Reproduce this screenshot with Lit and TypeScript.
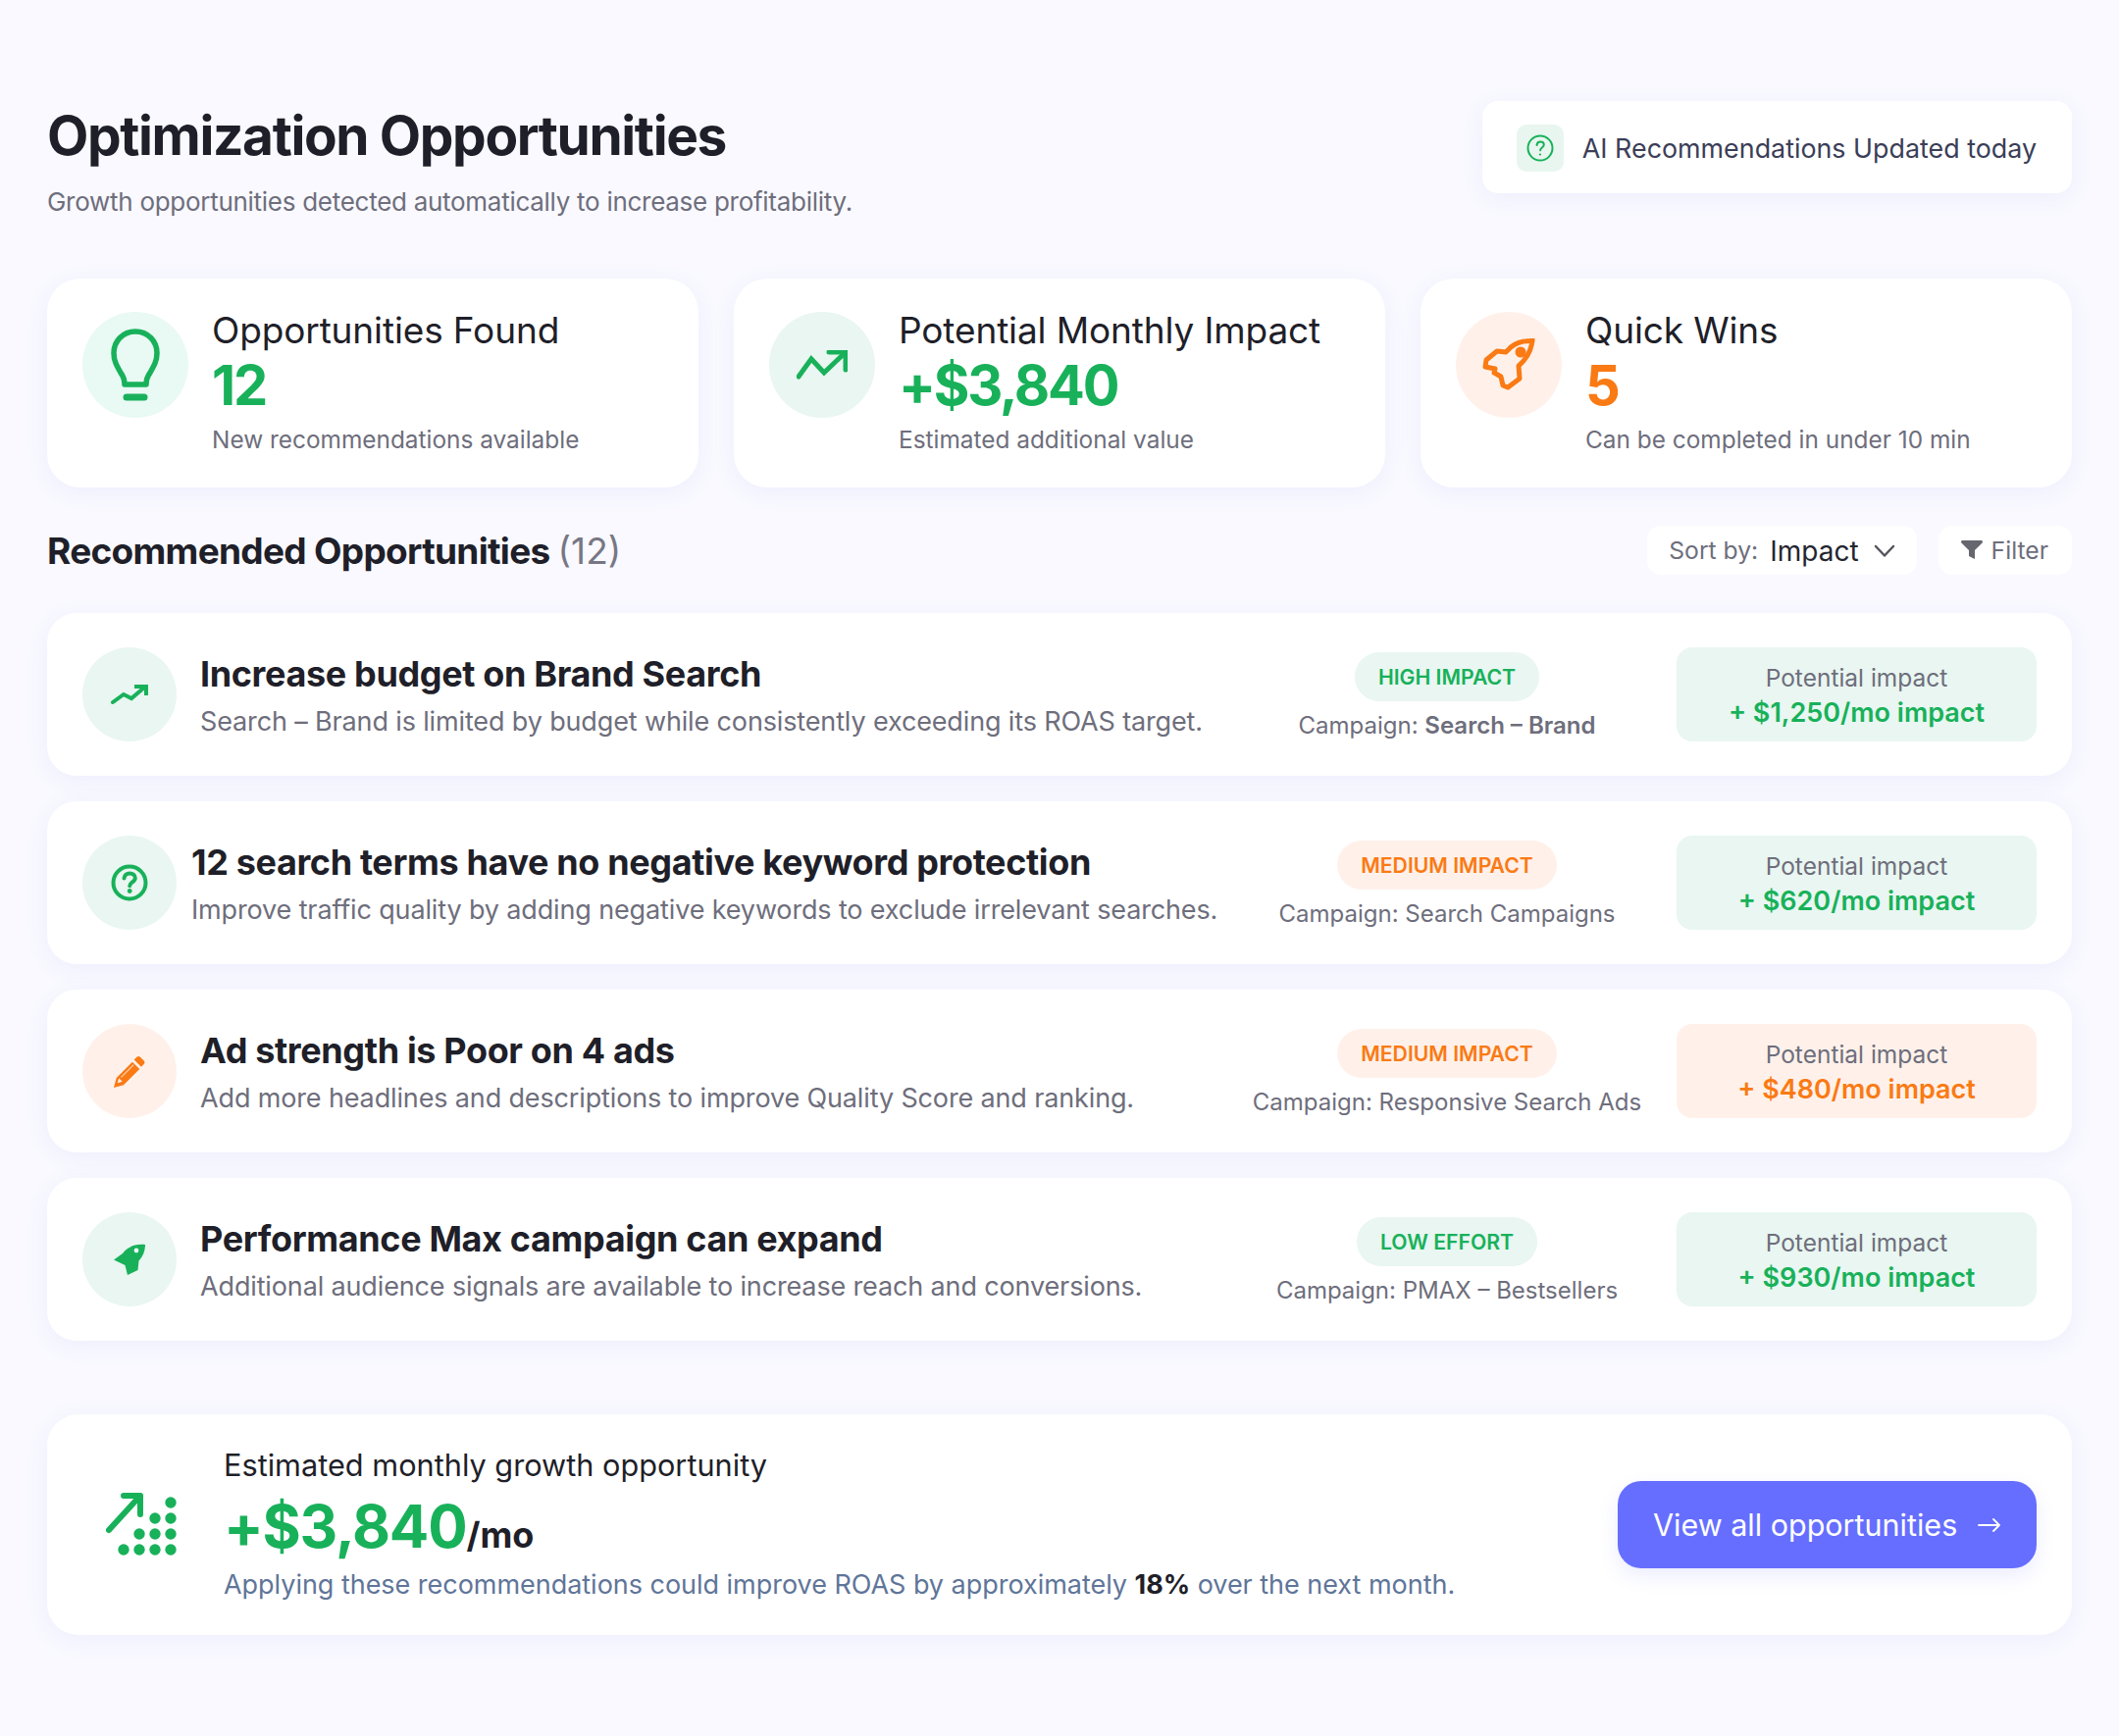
import { LitElement, html, css, svg } from 'lit';
import { customElement } from 'lit/decorators.js';

type Tone = 'green' | 'orange';

const trendStat = svg`<svg class="ic" width="52" height="30" viewBox="0 0 52 30" fill="none" stroke="currentColor" stroke-width="5" stroke-linecap="round" stroke-linejoin="miter"><path d="M2 27 15 9 28 23 50 2"/><path d="M33 2h17v18"/></svg>`;
const bulb = svg`<svg class="ic" width="50" height="74" viewBox="0 0 50 74" fill="none" stroke="currentColor" stroke-width="5.5" stroke-linecap="round" stroke-linejoin="round"><path d="M25 3C12 3 3 13 3 25c0 8 3 13 7 20 3 4 4 8 4 12h22c0-4 1-8 4-12 4-7 7-12 7-20C47 13 38 3 25 3Z"/><path d="M16 70h18" stroke-width="7"/></svg>`;
const rocketOutline = svg`<svg class="ic" width="54" height="54" viewBox="0 0 54 54" fill="none" stroke="currentColor" stroke-width="5" stroke-linejoin="round" stroke-linecap="round"><path d="M51 3C43 2 35 4 29 9l-5 5-9-1-11 9-1 7 10 2-1 4 7 4 2 9 5 2 12-9-1-13 5-5c5-6 9-13 9-24Z"/><circle cx="39" cy="14" r="5.5" fill="currentColor" stroke="none"/></svg>`;
const trendRow = svg`<svg class="ic" width="38" height="22" viewBox="0 0 38 22" fill="none" stroke="currentColor" stroke-width="4" stroke-linecap="round"><path d="M2 19 13 11 21 15 34 4"/><path d="M24 3h12v9" stroke-linecap="butt"/></svg>`;
const questionRow = svg`<svg class="ic" width="38" height="38" viewBox="0 0 38 38" fill="none" stroke="currentColor" stroke-width="4" stroke-linecap="round"><circle cx="19" cy="19" r="16.5"/><path d="M13.5 14.5c.5-3.5 3-5 5.8-5 3.2 0 5.5 2 5.5 4.8 0 4-5.6 4.3-5.6 8"/><circle cx="19.2" cy="27.5" r="2.4" fill="currentColor" stroke="none"/></svg>`;
const pencil = svg`<svg class="ic" width="36" height="36" viewBox="0 0 34 34" fill="currentColor"><path d="M24 3.500c1-.9 2.400-.9 3.400 0l3.500 3.500c.9 1 .9 2.400 0 3.400l-2.600 2.600-6.900-6.900Z"/><path d="M19.800 8.200l6.900 6.900-15.400 15.400-9.400 2.500 2.500-9.400Zm-13 15.600-1.400 4.800 4.800-1.400Z" fill-rule="evenodd"/><path d="M9 23 21 11" stroke="#fff1ea" stroke-width="1.200" opacity=".75"/></svg>`;
const rocketSolid = svg`<svg class="ic" width="34" height="34" viewBox="0 0 34 34" fill="currentColor"><path fill-rule="evenodd" d="M33 2c0 6-2 12-6.500 16.500L25.500 28 15 33l-2.500-10L1 17.500 10 11C14 5 22 1 33 2Zm-9 3.600a2.400 2.400 0 1 0 0 4.800 2.400 2.400 0 0 0 0-4.800Z"/></svg>`;
const growth = svg`<svg width="72" height="66" viewBox="0 0 72 66" fill="currentColor"><path d="M3 38 35 3M18 3h17v19" fill="none" stroke="currentColor" stroke-width="6" stroke-linecap="round" stroke-linejoin="round"/><circle cx="66" cy="10" r="5.700"/><circle cx="50" cy="26" r="5.700"/><circle cx="66" cy="26" r="5.700"/><circle cx="34" cy="42" r="5.700"/><circle cx="50" cy="42" r="5.700"/><circle cx="66" cy="42" r="5.700"/><circle cx="18" cy="58" r="5.700"/><circle cx="34" cy="58" r="5.700"/><circle cx="50" cy="58" r="5.700"/><circle cx="66" cy="58" r="5.700"/></svg>`;

const stats = [
  { tone: 'mint', icon: bulb, label: 'Opportunities Found', value: '12', valueTone: 'green', desc: 'New recommendations available' },
  { tone: 'green', icon: trendStat, label: 'Potential Monthly Impact', value: '+$3,840', valueTone: 'green', desc: 'Estimated additional value' },
  { tone: 'orange', icon: rocketOutline, label: 'Quick Wins', value: '5', valueTone: 'orange', desc: 'Can be completed in under 10 min' },
];

const rows = [
  { icon: trendRow, tone: 'green' as Tone, title: 'Increase budget on Brand Search', desc: 'Search – Brand is limited by budget while consistently exceeding its ROAS target.', pill: 'High impact', pillTone: 'green' as Tone, campaign: html`Campaign: <b>Search – Brand</b>`, boxTone: 'green' as Tone, amount: '+ $1,250/mo impact', tight: false },
  { icon: questionRow, tone: 'green' as Tone, title: '12 search terms have no negative keyword protection', desc: 'Improve traffic quality by adding negative keywords to exclude irrelevant searches.', pill: 'Medium impact', pillTone: 'orange' as Tone, campaign: html`Campaign: Search Campaigns`, boxTone: 'green' as Tone, amount: '+ $620/mo impact', tight: true },
  { icon: pencil, tone: 'orange' as Tone, title: 'Ad strength is Poor on 4 ads', desc: 'Add more headlines and descriptions to improve Quality Score and ranking.', pill: 'Medium impact', pillTone: 'orange' as Tone, campaign: html`Campaign: Responsive Search Ads`, boxTone: 'orange' as Tone, amount: '+ $480/mo impact', tight: false },
  { icon: rocketSolid, tone: 'green' as Tone, title: 'Performance Max campaign can expand', desc: 'Additional audience signals are available to increase reach and conversions.', pill: 'Low effort', pillTone: 'green' as Tone, campaign: html`Campaign: PMAX – Bestsellers`, boxTone: 'green' as Tone, amount: '+ $930/mo impact', tight: false },
];

@customElement('app-root')
export class AppRoot extends LitElement {
  static styles = css`
    :host {
      display: block;
      min-height: 1770px;
      background: #f9f9ff;
      font-family: Inter, 'Liberation Sans', sans-serif;
      color: #1f1f29;
    }

    .page { padding: 103px 48px 0; }

    .card {
      background: #fff;
      box-shadow: 0 5px 24px rgba(90, 100, 220, 0.07);
    }

    /* Header */
    .head { display: flex; justify-content: space-between; align-items: flex-start; height: 181px; }
    h1 { margin: 5px 0 0; font-size: 55px; line-height: 60px; font-weight: 700; letter-spacing: -0.025em; }
    .sub { margin: 20px 0 0; font-size: 26px; line-height: 36px; letter-spacing: -0.28px; color: #6e6e7c; }
    .updated {
      display: flex;
      align-items: center;
      gap: 19px;
      height: 94px;
      box-sizing: border-box;
      padding: 2px 36px 0 35px;
      border-radius: 16px;
      font-size: 26.85px;
      color: #3b3e58;
    }
    .updated-ic {
      display: flex;
      align-items: center;
      justify-content: center;
      width: 48px;
      height: 48px;
      border-radius: 10px;
      background: #e8f6ef;
      color: #18b15a;
    }

    /* Stat cards */
    .stats { display: grid; grid-template-columns: repeat(3, 1fr); gap: 36px; }
    .stat {
      display: flex;
      gap: 24px;
      height: 213px;
      box-sizing: border-box;
      padding: 34px 36px;
      border-radius: 34px;
    }
    .circle {
      flex: none;
      display: flex;
      align-items: center;
      justify-content: center;
      width: 108px;
      height: 108px;
      border-radius: 50%;
    }
    .circle.mint { background: #e9f9f4; color: #18b15a; }
    .circle.green { background: #e9f6f1; color: #18b15a; }
    .circle.orange { background: #fff1ea; color: #fa7a14; }
    .stat-label { font-size: 37px; line-height: 40px; margin-top: -1px; letter-spacing: -0.13px; }
    .stat-value { font-size: 56px; line-height: 64px; font-weight: 700; margin-top: 4px; letter-spacing: -0.04em; }
    .stat-value.green, .box-value.green { color: #18b15a; }
    .stat-value.orange, .box-value.orange { color: #fa7a14; }
    .stat-desc { font-size: 24.4px; line-height: 30px; color: #6e6e7c; margin-top: 8px; }

    /* Section bar */
    .bar { display: flex; align-items: center; height: 50px; margin: 39px 0; gap: 22px; }
    h2 { flex: 1; margin: 0; font-size: 37px; font-weight: 700; letter-spacing: -0.7px; }
    h2 span { font-weight: 400; color: #777784; letter-spacing: 0; }
    .ctl {
      display: flex;
      align-items: center;
      height: 50px;
      box-sizing: border-box;
      padding: 0 24px 0 23px;
      background: #fff;
      border-radius: 14px;
      font-size: 24.7px;
      color: #6e6e7c;
    }
    .ctl strong { font-weight: 400; font-size: 28px; line-height: 30px; padding-top: 2px; color: #25252f; margin: 0 15px 0 12px; }
    .sort { padding: 0 22px; }
    .sort svg { margin-top: 2px; }
    .funnel { margin: 0 8px 0 -1px; }

    /* Rows */
    .rows { display: flex; flex-direction: column; gap: 26px; }
    .row {
      display: flex;
      align-items: center;
      height: 166px;
      box-sizing: border-box;
      padding: 0 36px;
      border-radius: 30px;
    }
    .row .circle { width: 96px; height: 96px; margin-right: 24px; }
    .row.tight .circle { margin-right: 15px; }
    .row-text { flex: 1; min-width: 0; padding-top: 2px; }
    .row-title { font-size: 36px; line-height: 44px; font-weight: 700; letter-spacing: -0.01em; white-space: nowrap; }
    .row-desc { font-size: 27px; line-height: 36px; letter-spacing: -0.14px; color: #6e6e7c; margin-top: 9px; white-space: nowrap; }
    .mid { flex: none; width: 468px; display: flex; flex-direction: column; align-items: center; padding-top: 3px; }
    .pill {
      height: 50px;
      display: flex;
      align-items: center;
      padding: 0 24px;
      border-radius: 25px;
      font-size: 21.2px;
      font-weight: 600;
      text-transform: uppercase;
    }
    .pill.green { background: #e9f6f1; color: #18b15a; }
    .pill.orange { background: #fff1ea; color: #fa7a14; }
    .campaign { font-size: 24px; line-height: 30px; color: #6e6e7c; margin-top: 10px; white-space: nowrap; }
    .campaign b { font-weight: 600; }
    .box {
      flex: none;
      width: 367px;
      height: 96px;
      box-sizing: border-box;
      padding-top: 3px;
      border-radius: 16px;
      display: flex;
      flex-direction: column;
      align-items: center;
      justify-content: center;
    }
    .box.green { background: #e9f6f1; }
    .box.orange { background: #fff1ea; }
    .box-label { font-size: 24.5px; line-height: 32px; color: #6e6e7c; }
    .box-value { font-size: 27px; line-height: 36px; font-weight: 600; margin-top: 2px; }

    /* Summary */
    .summary {
      display: flex;
      align-items: center;
      height: 225px;
      box-sizing: border-box;
      margin-top: 75px;
      padding: 0 36px 0 60px;
      border-radius: 32px;
    }
    .growth { flex: none; width: 120px; color: #18b15a; display: flex; }
    .sum-text { flex: 1; }
    .sum-label { font-size: 30.7px; line-height: 36px; }
    .sum-value { font-size: 60px; line-height: 76px; font-weight: 700; color: #18b15a; margin-top: 6px; letter-spacing: -0.02em; }
    .sum-value span { font-size: 36px; color: #1f1f29; letter-spacing: 0; }
    .sum-desc { font-size: 27px; line-height: 36px; letter-spacing: -0.03px; color: #5f7599; margin-top: -5px; }
    .sum-desc b { color: #1f1f29; font-weight: 700; }
    .cta {
      display: flex;
      align-items: center;
      justify-content: space-between;
      width: 427px;
      height: 89px;
      box-sizing: border-box;
      padding: 0 36px;
      border: none;
      border-radius: 24px;
      background: #666eff;
      color: #fff;
      font: 400 30.5px Inter, sans-serif;
      white-space: nowrap;
      box-shadow: 0 8px 20px rgba(102, 110, 255, 0.12);
    }
  `;

  render() {
    return html`
      <div class="page">
        <header class="head">
          <div>
            <h1>Optimization Opportunities</h1>
            <p class="sub">Growth opportunities detected automatically to increase profitability.</p>
          </div>
          <div class="updated card">
            <span class="updated-ic">
              <svg width="28" height="28" viewBox="0 0 28 28" fill="none" stroke="currentColor" stroke-width="2" stroke-linecap="round"><circle cx="14" cy="14" r="12.5"/><path d="M10.500 11c.3-2.300 1.800-3.500 3.700-3.500 2.100 0 3.600 1.300 3.600 3.100 0 2.800-3.700 3-3.700 5.600"/><circle cx="14" cy="20.500" r="1.100" fill="currentColor" stroke="none"/></svg>
            </span>
            AI Recommendations Updated today
          </div>
        </header>

        <section class="stats">
          ${stats.map(s => html`
            <div class="stat card">
              <div class="circle ${s.tone}">${s.icon}</div>
              <div>
                <div class="stat-label">${s.label}</div>
                <div class="stat-value ${s.valueTone}">${s.value}</div>
                <div class="stat-desc">${s.desc}</div>
              </div>
            </div>
          `)}
        </section>

        <div class="bar">
          <h2>Recommended Opportunities <span>(12)</span></h2>
          <div class="ctl sort">
            Sort by: <strong>Impact</strong>
            <svg width="22" height="14" viewBox="0 0 22 14" fill="none" stroke="#55555f" stroke-width="2.500" stroke-linecap="round" stroke-linejoin="round"><path d="M2 2l9 9.500L20 2"/></svg>
          </div>
          <div class="ctl">
            <svg class="funnel" width="24" height="22" viewBox="0 0 24 22" fill="#66666f"><path d="M1 2.500C1 1.500 1.800 1 2.500 1h19c.8 0 1.500.6 1.500 1.500 0 .4-.1.7-.4 1L15 11v9l-6-3v-6L1.400 3.500C1.100 3.200 1 2.900 1 2.500Z"/></svg>
            Filter
          </div>
        </div>

        <section class="rows">
          ${rows.map(r => html`
            <article class="row card ${r.tight ? 'tight' : ''}">
              <div class="circle ${r.tone}">${r.icon}</div>
              <div class="row-text">
                <div class="row-title">${r.title}</div>
                <div class="row-desc">${r.desc}</div>
              </div>
              <div class="mid">
                <span class="pill ${r.pillTone}">${r.pill}</span>
                <div class="campaign">${r.campaign}</div>
              </div>
              <div class="box ${r.boxTone}">
                <div class="box-label">Potential impact</div>
                <div class="box-value ${r.boxTone}">${r.amount}</div>
              </div>
            </article>
          `)}
        </section>

        <section class="summary card">
          <div class="growth">${growth}</div>
          <div class="sum-text">
            <div class="sum-label">Estimated monthly growth opportunity</div>
            <div class="sum-value">+$3,840<span>/mo</span></div>
            <div class="sum-desc">Applying these recommendations could improve ROAS by approximately <b>18%</b> over the next month.</div>
          </div>
          <button class="cta">
            View all opportunities
            <svg width="24" height="16" viewBox="0 0 24 16" fill="none" stroke="#fff" stroke-width="1.800" stroke-linecap="round" stroke-linejoin="round"><path d="M1 8h21M16 2l6 6-6 6"/></svg>
          </button>
        </section>
      </div>
    `;
  }
}
